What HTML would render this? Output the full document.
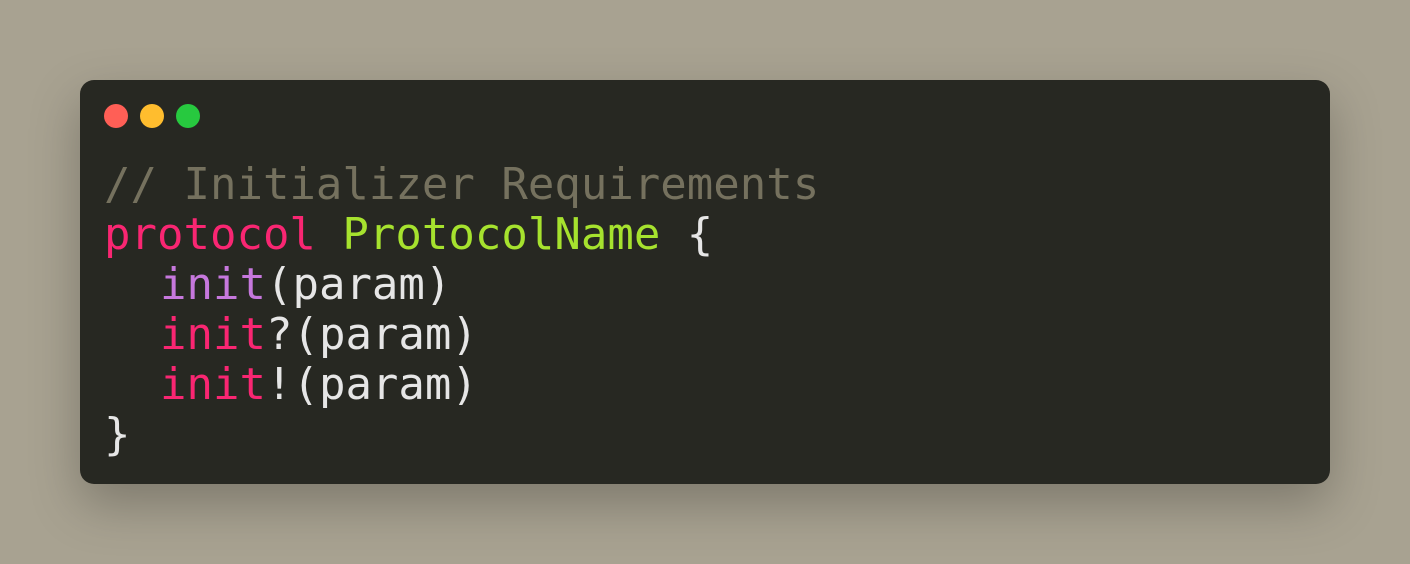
<!DOCTYPE html>
<html><head><meta charset="utf-8"><style>
html,body{margin:0;padding:0}
body{width:1410px;height:564px;background:#a8a291;position:relative;overflow:hidden}
.win{position:absolute;left:80px;top:80px;width:1250px;height:404px;background:#272822;border-radius:14px;box-shadow:0 20px 50px rgba(0,0,0,0.25)}
.d{position:absolute;top:24px;width:24px;height:24px;border-radius:50%}
pre{position:absolute;left:24px;top:80px;margin:0;font-family:"DejaVu Sans Mono","Liberation Mono",monospace;font-size:44px;line-height:50px;color:#e6e6e6}
.c{color:#75715e}.k{color:#f92672}.t{color:#a6e22e}
.i{display:inline-block;width:56px}
</style></head><body>
<div class="win">
<div class="d" style="left:24px;background:#ff5f56"></div>
<div class="d" style="left:60px;background:#ffbd2e"></div>
<div class="d" style="left:96px;background:#27c93f"></div>
<pre><span class="c">// Initializer Requirements</span>
<span class="k">protocol</span> <span class="t">ProtocolName</span> {
<span class="i"></span><span style="color:#c678dd">init</span>(param)
<span class="i"></span><span class="k">init</span>?(param)
<span class="i"></span><span class="k">init</span>!(param)
}</pre>
</div>
</body></html>
